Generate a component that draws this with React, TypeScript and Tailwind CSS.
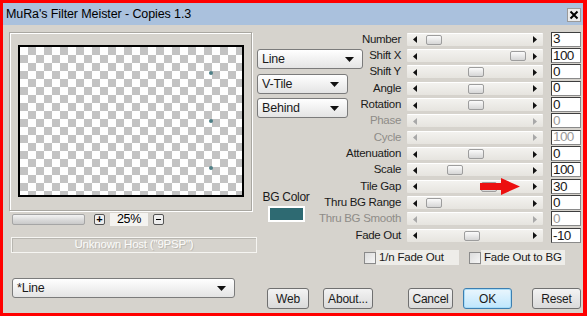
import React from "react";

type Row = { label: string; val: string; thumb?: number; off?: boolean };

const rows: Row[] = [
  { label: "Number", val: "3", thumb: 19 },
  { label: "Shift X", val: "100", thumb: 103 },
  { label: "Shift Y", val: "0", thumb: 61 },
  { label: "Angle", val: "0", thumb: 61 },
  { label: "Rotation", val: "0", thumb: 61 },
  { label: "Phase", val: "0", off: true },
  { label: "Cycle", val: "100", off: true },
  { label: "Attenuation", val: "0", thumb: 61 },
  { label: "Scale", val: "100", thumb: 40 },
  { label: "Tile Gap", val: "30", thumb: 74 },
  { label: "Thru BG Range", val: "0", thumb: 19 },
  { label: "Thru BG Smooth", val: "0", off: true },
  { label: "Fade Out", val: "-10", thumb: 57 },
];

function Arrow({ dir, off }: { dir: "l" | "r" | "d"; off?: boolean }) {
  const c = off ? "#a8a8a8" : "#111";
  if (dir === "d")
    return (
      <svg width="9" height="5" viewBox="0 0 9 5">
        <polygon points="0,0 9,0 4.5,5" fill={c} />
      </svg>
    );
  return (
    <svg width="4" height="7" viewBox="0 0 4 7">
      <polygon points={dir === "l" ? "4,0 4,7 0,3.5" : "0,0 0,7 4,3.5"} fill={c} />
    </svg>
  );
}

function Select({ text, w }: { text: string; w: string }) {
  return (
    <div className={`${w} h-[20px] shrink-0 rounded-[3px] border border-[#7b7b7b] bg-linear-to-b from-white to-[#e4e4e4] flex items-center justify-between pl-[4px] pr-[8px] text-[12.5px] tracking-[-0.2px] text-[#1a1a1a]`}>
      <span>{text}</span>
      <Arrow dir="d" />
    </div>
  );
}

function Btn({ text, w, ml, ok }: { text: string; w: string; ml: string; ok?: boolean }) {
  return (
    <div
      className={`${w} ${ml} h-[21px] rounded-[3px] border flex items-center justify-center text-[12px] tracking-[-0.2px] text-[#1a1a1a] ${
        ok
          ? "border-[#3c7fb1] bg-linear-to-b from-[#eaf6fd] to-[#bee6fd] shadow-[inset_0_0_0_1px_#a8dcf8]"
          : "border-[#707070] bg-linear-to-b from-[#f3f3f3] to-[#dadada]"
      }`}
    >
      {text}
    </div>
  );
}

export default function App() {
  return (
    <div className="w-[587px] h-[316px] bg-[#f00] pl-[3px] pt-[3px] pr-[4px] pb-[3px] font-['Liberation_Sans',Arial,sans-serif] overflow-hidden">
      <div className="h-full flex flex-col bg-[#d6d3cd]">
        {/* title bar */}
        <div className="h-[22px] shrink-0 bg-[#aac1dd] flex items-center justify-between pl-[3px] pr-[2px]">
          <span className="text-[12.5px] tracking-[-0.1px] text-black">MuRa's Filter Meister - Copies 1.3</span>
          <div className="w-[14px] h-[14px] mt-[1px] bg-[#ececec] border border-[#9a9a9a] flex items-center justify-center">
            <svg width="10" height="10" viewBox="0 0 10 10">
              <path d="M1.5 1.5 L8.5 8.5 M8.5 1.5 L1.5 8.5" stroke="#000" strokeWidth="2" />
            </svg>
          </div>
        </div>

        <div className="relative flex-1 flex">
          {/* left column */}
          <div className="w-[254px] shrink-0 pl-[6px] pt-[7px] flex flex-col">
            <div className="w-[243px] h-[179px] border border-[#a9a7a1] shadow-[inset_1px_1px_0_#fff,1px_1px_0_#fff] pl-[8px] pt-[12px]">
              <div className="relative w-[226px] h-[152px] border-2 border-black bg-[conic-gradient(#c3c3c3_25%,#fff_0_50%,#c3c3c3_0_75%,#fff_0)] bg-[length:16px_16px]">
                <div className="absolute left-[189px] top-[24px] w-[4px] h-[4px] rounded-full bg-[#4e7f86]" />
                <div className="absolute left-[189px] top-[72px] w-[4px] h-[4px] rounded-full bg-[#4e7f86]" />
                <div className="absolute left-[189px] top-[119px] w-[4px] h-[4px] rounded-full bg-[#4e7f86]" />
              </div>
            </div>

            <div className="mt-[2px] flex items-center h-[12px]">
              <div className="ml-[3px] w-[73px] h-[11px] rounded-[2px] border border-[#a5a5a5] bg-linear-to-b from-[#f4f4f4] via-[#dcdcdc] to-[#c9c9c9]" />
              <div className="ml-[9px] w-[11px] h-[11px] rounded-[2px] border border-[#555] bg-[#eee] flex items-center justify-center text-[11px] font-bold leading-none">+</div>
              <div className="ml-[5px] w-[38px] h-[13px] bg-[#f4f3f0] flex items-center justify-center text-[12.5px] tracking-[-0.3px]">25%</div>
              <div className="ml-[5px] w-[11px] h-[11px] rounded-[2px] border border-[#555] bg-[#eee] flex items-center justify-center">
                <div className="w-[5px] h-[1px] bg-black" />
              </div>
            </div>

            <div className="ml-[2px] mt-[12px] w-[246px] h-[16px] border border-[#f6f5f2] shadow-[inset_1px_1px_0_#b8b6b0] flex items-center justify-center text-[11.5px] tracking-[-0.2px] text-[#fbfbfa] [text-shadow:1px_1px_0_#bdbab3]">
              Unknown Host ("9PSP")
            </div>

            <div className="ml-[3px] mt-[25px]">
              <Select text="*Line" w="w-[223px]" />
            </div>
          </div>

          {/* right part */}
          <div className="flex-1 flex flex-col">
            <div className="flex">
              {/* middle column */}
              <div className="w-[106px] shrink-0 flex flex-col pt-[24px]">
                <Select text="Line" w="w-[106px]" />
                <div className="mt-[5px]">
                  <Select text="V-Tile" w="w-[91px]" />
                </div>
                <div className="mt-[4px]">
                  <Select text="Behind" w="w-[91px]" />
                </div>
                <div className="mt-[72px] ml-[8px] w-[42px] flex flex-col items-center">
                  <span className="text-[12px] tracking-[-0.3px] whitespace-nowrap text-[#1a1a1a] leading-[14px]">BG Color</span>
                  <div className="mt-[2px] w-[37px] h-[16px] border-2 border-white bg-[#2e6a72]" />
                </div>
              </div>

              {/* sliders */}
              <div className="flex flex-col pt-[6px]">
                {rows.map((r) => (
                  <div key={r.label} className="h-[16.35px] flex items-center">
                    <div className={`w-[38px] flex justify-end whitespace-nowrap text-[11.5px] tracking-[-0.3px] ${r.off ? "text-[#8e8c88]" : "text-[#1a1a1a]"}`}>
                      {r.label}
                    </div>
                    <div className="relative ml-[6px] w-[136px] h-[13px] rounded-[1px] border-t border-t-white bg-linear-to-b from-[#f3f2ef] to-[#e6e4df] flex items-center justify-between pl-[6px] pr-[6px]">
                      <Arrow dir="l" off={r.off} />
                      {r.thumb !== undefined && (
                        <div
                          className="absolute top-[1px] w-[16px] h-[10px] rounded-[2px] border border-[#9d9d9d] bg-linear-to-b from-[#fbfbfb] to-[#d6d6d6]"
                          style={{ left: r.thumb }}
                        />
                      )}
                      <Arrow dir="r" off={r.off} />
                    </div>
                    <div className={`ml-[8px] w-[30px] h-[15px] bg-white border border-[#8a8a8a] border-t-[#3e3e3e] border-l-[#3e3e3e] flex items-center pl-[1px] text-[13.5px] tracking-[-0.6px] leading-none ${r.off ? "text-[#9a9a9a]" : "text-[#1a1a1a]"}`}>
                      {r.val}
                    </div>
                  </div>
                ))}
              </div>
            </div>

            {/* checkboxes */}
            <div className="mt-[7px] ml-[107px] flex items-center text-[11.5px] tracking-[-0.2px] text-[#1a1a1a] whitespace-nowrap">
              <div className="w-[12px] h-[12px] border border-[#8a8a8a] bg-linear-to-br from-[#dcdcdc] to-[#f6f6f6]" />
              <div className="w-[83px] h-[15px] bg-[#eeede9] flex items-center pl-[3px]">1/n Fade Out</div>
              <div className="ml-[10px] w-[12px] h-[12px] border border-[#8a8a8a] bg-linear-to-br from-[#dcdcdc] to-[#f6f6f6]" />
              <div className="w-[84px] h-[15px] bg-[#eeede9] flex items-center pl-[3px]">Fade Out to BG</div>
            </div>

            {/* buttons */}
            <div className="mt-[23px] flex">
              <Btn text="Web" w="w-[42px]" ml="ml-[10px]" />
              <Btn text="About..." w="w-[50px]" ml="ml-[14px]" />
              <Btn text="Cancel" w="w-[45px]" ml="ml-[35px]" />
              <Btn text="OK" w="w-[49px]" ml="ml-[10px]" ok />
              <Btn text="Reset" w="w-[49px]" ml="ml-[20px]" />
            </div>
          </div>

          {/* red annotation arrow */}
          <svg className="absolute left-[477px] top-[153px]" width="40" height="17" viewBox="0 0 40 17">
            <polygon points="0,5 21,5 21,0 40,8.5 21,17 21,12 0,12" fill="#ec1010" />
          </svg>
        </div>
      </div>
    </div>
  );
}
